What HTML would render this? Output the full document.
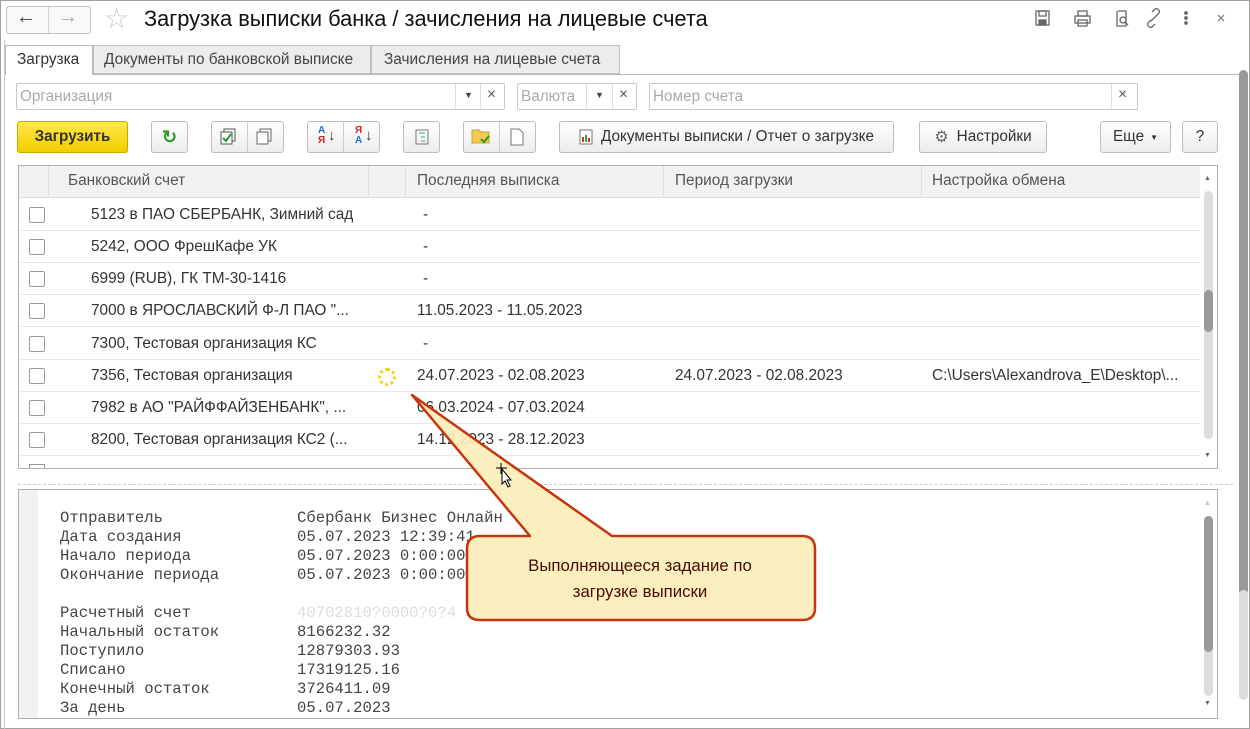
<!DOCTYPE html>
<html><head><meta charset="utf-8"><style>
*{box-sizing:border-box;margin:0;padding:0}
body{width:1250px;height:729px;background:#fff;font-family:"Liberation Sans",Arial,sans-serif;font-size:15.4px;color:#333;position:relative;overflow:hidden}
.a{position:absolute}
.btn{position:absolute;border:1px solid #bdbdbd;border-radius:3px;background:linear-gradient(#fff,#ececec);height:32px;display:flex;align-items:center;justify-content:center;color:#333;font-size:15.3px}
.inp{position:absolute;border:1px solid #c8c8c8;border-radius:2px;height:27px;background:#fff;color:#aaa;font-size:15.3px;padding:4px 3px}
.row{position:absolute;left:19px;width:1181px;height:32px;border-bottom:1px solid #e8e8e8}
.cb{position:absolute;left:10px;top:8px;width:16px;height:16px;border:1px solid #999;border-radius:2px;background:#fff}
.row span{position:absolute;top:7px;white-space:nowrap}
.mono{font-family:"Liberation Mono",monospace;font-size:15.6px;color:#444;line-height:19px;white-space:pre;position:absolute}
</style></head><body>
<div class="a" style="left:0;top:0;width:1250px;height:729px;border:1px solid #a0a0a0"></div>
<div class="a" style="left:4px;top:40px;width:1px;height:689px;background:#c8c8c8"></div>
<div class="a" style="left:6px;top:6px;width:85px;height:28px;border:1px solid #c0c0c0;border-radius:3px;background:#f8f8f8"></div>
<div class="a" style="left:48px;top:7px;width:1px;height:26px;background:#d0d0d0"></div>
<div class="a" style="left:16px;top:6px;font-size:20px;color:#444">&#8592;</div>
<div class="a" style="left:58px;top:6px;font-size:20px;color:#aaa">&#8594;</div>
<div class="a" style="left:104px;top:2px;font-size:28px;color:#ccc">&#9734;</div>
<div class="a" style="left:144px;top:6px;font-size:21.8px;color:#111">Загрузка выписки банка / зачисления на лицевые счета</div>
<svg class="a" style="left:1030px;top:8px" width="200" height="22" fill="none" stroke="#666" stroke-width="1.3">
<rect x="6" y="3" width="13" height="14"/><rect x="9" y="3" width="7" height="5"/><rect x="9" y="12" width="7" height="5" fill="#666"/>
<rect x="45" y="8" width="15" height="7"/><rect x="48" y="3" width="9" height="5"/><rect x="48" y="12" width="9" height="6"/>
<path d="M88 3h8v15h-9v-15"/><circle cx="93" cy="12" r="3"/><path d="M95 14l3 3"/>
<path d="M121 12l-3 3a3 3 0 0 0 4 4l3-3M126 8l3-3a3 3 0 0 0-4-4l-3 3M121 13l5-5"/>
<circle cx="156" cy="5" r="1.2" fill="#666"/><circle cx="156" cy="10" r="1.2" fill="#666"/><circle cx="156" cy="15" r="1.2" fill="#666"/>
<path d="M188 7l6 6M194 7l-6 6" stroke="#888"/>
</svg>
<div class="a" style="left:5px;top:74px;width:1235px;height:1px;background:#b8b8b8"></div>
<div class="a" style="left:5px;top:45px;width:88px;height:30px;border:1px solid #b8b8b8;border-bottom:none;background:#fff;padding:5px 11px;color:#333">Загрузка</div>
<div class="a" style="left:93px;top:45px;width:278px;height:29px;border:1px solid #c0c0c0;background:#ececec;padding:5px 10px;color:#444">Документы по банковской выписке</div>
<div class="a" style="left:371px;top:45px;width:249px;height:29px;border:1px solid #c0c0c0;background:#ececec;padding:5px 12px;color:#444">Зачисления на лицевые счета</div>
<div class="inp" style="left:16px;top:83px;width:489px">Организация</div>
<div class="a" style="left:455px;top:84px;width:1px;height:25px;background:#ddd"></div>
<div class="a" style="left:480px;top:84px;width:1px;height:25px;background:#ddd"></div>
<div class="a" style="left:464px;top:90px;font-size:9px;color:#444">▼</div>
<div class="a" style="left:487px;top:86px;color:#555">×</div>
<div class="inp" style="left:517px;top:83px;width:120px">Валюта</div>
<div class="a" style="left:586px;top:84px;width:1px;height:25px;background:#ddd"></div>
<div class="a" style="left:612px;top:84px;width:1px;height:25px;background:#ddd"></div>
<div class="a" style="left:595px;top:90px;font-size:9px;color:#444">▼</div>
<div class="a" style="left:619px;top:86px;color:#555">×</div>
<div class="inp" style="left:649px;top:83px;width:489px">Номер счета</div>
<div class="a" style="left:1111px;top:84px;width:1px;height:25px;background:#ddd"></div>
<div class="a" style="left:1118px;top:86px;color:#555">×</div>
<div class="btn" style="left:17px;top:121px;width:111px;background:linear-gradient(#ffe84a,#f2cd00);border-color:#c9a800;font-weight:bold;color:#333">Загрузить</div>
<div class="btn" style="left:151px;top:121px;width:37px;color:#2a9a2a;font-size:18px;font-weight:bold">&#8635;</div>
<div class="btn" style="left:211px;top:121px;width:73px"></div>
<div class="a" style="left:247px;top:122px;width:1px;height:30px;background:#ccc"></div>
<svg class="a" style="left:220px;top:128px" width="60" height="18" fill="none"><rect x="4" y="1" width="11" height="12" stroke="#555"/><rect x="1" y="4" width="11" height="12" fill="#fff" stroke="#555"/><path d="M3 10l3 3 5-7" stroke="#2a9a2a" stroke-width="2"/><rect x="40" y="1" width="11" height="12" stroke="#666"/><rect x="37" y="4" width="11" height="12" fill="#fff" stroke="#666"/></svg>
<div class="btn" style="left:307px;top:121px;width:73px"></div>
<div class="a" style="left:343px;top:122px;width:1px;height:30px;background:#ccc"></div>
<div class="a" style="left:318px;top:126px;font-size:10px;line-height:10px;font-weight:bold"><span style="color:#2a6ac8">А</span><br><span style="color:#c82a2a">Я</span></div>
<div class="a" style="left:328px;top:127px;font-size:15px">↓</div>
<div class="a" style="left:355px;top:126px;font-size:10px;line-height:10px;font-weight:bold"><span style="color:#c82a2a">Я</span><br><span style="color:#2a6ac8">А</span></div>
<div class="a" style="left:365px;top:127px;font-size:15px">↓</div>
<div class="btn" style="left:403px;top:121px;width:37px"><svg width="14" height="16" fill="none" stroke="#777"><rect x="1" y="1" width="12" height="14"/><path d="M4 4h6M6 8h4M6 12h4" stroke="#3a9"/></svg></div>
<div class="btn" style="left:463px;top:121px;width:73px"></div>
<div class="a" style="left:499px;top:122px;width:1px;height:30px;background:#ccc"></div>
<svg class="a" style="left:471px;top:127px" width="60" height="20"><path d="M1 3h7l2 2h8v11H1z" fill="#f3c94f" stroke="#c9a23a"/><path d="M10 12l3 3 5-6" stroke="#2a9a2a" stroke-width="2" fill="none"/><path d="M40 2h8l4 4v12H40z" fill="#fff" stroke="#777"/></svg>
<div class="btn" style="left:559px;top:121px;width:335px"><svg width="14" height="16" style="margin-right:8px"><rect x="1" y="1" width="12" height="14" fill="#fff" stroke="#777"/><rect x="3" y="8" width="2" height="5" fill="#c33"/><rect x="6" y="6" width="2" height="7" fill="#3a3"/><rect x="9" y="9" width="2" height="4" fill="#c33"/></svg>Документы выписки / Отчет о загрузке</div>
<div class="btn" style="left:919px;top:121px;width:128px"><span style="font-size:16px;color:#666;margin-right:8px">⚙</span>Настройки</div>
<div class="btn" style="left:1100px;top:121px;width:71px">Еще <span style="font-size:8px;margin-left:6px">▼</span></div>
<div class="btn" style="left:1182px;top:121px;width:36px">?</div>
<div class="a" style="left:18px;top:165px;width:1200px;height:304px;border:1px solid #b0b0b0"></div>
<div class="a" style="left:19px;top:166px;width:1181px;height:32px;background:#f2f2f2;border-bottom:1px solid #ddd"></div>
<div class="a" style="left:48px;top:166px;width:1px;height:32px;background:#ddd"></div>
<div class="a" style="left:368px;top:166px;width:1px;height:32px;background:#ddd"></div>
<div class="a" style="left:405px;top:166px;width:1px;height:32px;background:#ddd"></div>
<div class="a" style="left:663px;top:166px;width:1px;height:32px;background:#ddd"></div>
<div class="a" style="left:921px;top:166px;width:1px;height:32px;background:#ddd"></div>
<div class="a" style="left:68px;top:172px;color:#555">Банковский счет</div>
<div class="a" style="left:417px;top:172px;color:#555">Последняя выписка</div>
<div class="a" style="left:675px;top:172px;color:#555">Период загрузки</div>
<div class="a" style="left:932px;top:172px;color:#555">Настройка обмена</div>
<div class="row" style="top:199px"><div class="cb"></div><span style="left:72px">5123 в ПАО СБЕРБАНК, Зимний сад</span><span style="left:404px">-</span></div>
<div class="row" style="top:231px"><div class="cb"></div><span style="left:72px">5242, ООО ФрешКафе УК</span><span style="left:404px">-</span></div>
<div class="row" style="top:263px"><div class="cb"></div><span style="left:72px">6999 (RUB), ГК ТМ-30-1416</span><span style="left:404px">-</span></div>
<div class="row" style="top:295px"><div class="cb"></div><span style="left:72px">7000 в ЯРОСЛАВСКИЙ Ф-Л ПАО "...</span><span style="left:398px">11.05.2023 - 11.05.2023</span></div>
<div class="row" style="top:328px"><div class="cb"></div><span style="left:72px">7300, Тестовая организация КС</span><span style="left:404px">-</span></div>
<div class="row" style="top:360px"><div class="cb"></div><span style="left:72px">7356, Тестовая организация</span><span style="left:398px">24.07.2023 - 02.08.2023</span><span style="left:656px">24.07.2023 - 02.08.2023</span><span style="left:913px">C:\Users\Alexandrova_E\Desktop\...</span></div>
<div class="a" style="left:378px;top:368px;width:18px;height:18px;border:3px dotted #f0d020;border-radius:50%"></div>
<div class="row" style="top:392px"><div class="cb"></div><span style="left:72px">7982 в АО "РАЙФФАЙЗЕНБАНК", ...</span><span style="left:398px">06.03.2024 - 07.03.2024</span></div>
<div class="row" style="top:424px"><div class="cb"></div><span style="left:72px">8200, Тестовая организация КС2 (...</span><span style="left:398px">14.12.2023 - 28.12.2023</span></div>
<div class="a" style="left:29px;top:464px;width:16px;height:4px;border:1px solid #999;border-bottom:none"></div>
<div class="a" style="left:1204px;top:175px;font-size:7px;color:#666">▲</div>
<div class="a" style="left:1204px;top:191px;width:9px;height:248px;background:#ddd;border-radius:5px"></div>
<div class="a" style="left:1204px;top:290px;width:9px;height:42px;background:#9a9a9a;border-radius:5px"></div>
<div class="a" style="left:1204px;top:452px;font-size:7px;color:#666">▼</div>
<div class="a" style="left:18px;top:484px;width:1215px;border-top:1px dashed #ccc"></div>
<div class="a" style="left:18px;top:489px;width:1200px;height:230px;border:1px solid #b0b0b0"></div>
<div class="a" style="left:19px;top:490px;width:19px;height:228px;background:#f2f2f2"></div>
<div class="mono" style="left:60px;top:509px">Отправитель
Дата создания
Начало периода
Окончание периода

Расчетный счет
Начальный остаток
Поступило
Списано
Конечный остаток
За день</div>
<div class="mono" style="left:297px;top:509px">Сбербанк Бизнес Онлайн
05.07.2023 12:39:41
05.07.2023 0:00:00
05.07.2023 0:00:00

<span style="color:#ddd">40702810?0000?0?4</span>
8166232.32
12879303.93
17319125.16
3726411.09
05.07.2023</div>
<div class="a" style="left:1204px;top:500px;font-size:7px;color:#bbb">▲</div>
<div class="a" style="left:1204px;top:516px;width:9px;height:180px;background:#ddd;border-radius:5px"></div>
<div class="a" style="left:1204px;top:516px;width:9px;height:136px;background:#9a9a9a;border-radius:5px"></div>
<div class="a" style="left:1204px;top:700px;font-size:7px;color:#666">▼</div>
<div class="a" style="left:1239px;top:70px;width:9px;height:525px;background:#9a9a9a;border-radius:5px"></div>
<div class="a" style="left:1239px;top:590px;width:9px;height:110px;background:#ddd;border-radius:5px"></div>
<svg class="a" style="left:0;top:0" width="1250" height="729">
<path d="M478 536 L530 536 L412 395 L612 536 L802 536 Q815 536 815 549 L815 608 Q815 620 802 620 L480 620 Q467 620 467 608 L467 549 Q467 536 480 536 Z" fill="#fbeebb" fill-opacity="0.93" stroke="#c8340c" stroke-width="2.5" stroke-linejoin="round"/>
<text x="640" y="571" text-anchor="middle" font-family="Liberation Sans,sans-serif" font-size="16.8" fill="#4a0a00">Выполняющееся задание по</text>
<text x="640" y="597" text-anchor="middle" font-family="Liberation Sans,sans-serif" font-size="16.8" fill="#4a0a00">загрузке выписки</text>
<path d="M501 463 v11 M496 468 h11 M502 469 l0 15 l3-3 l3 6 l2-1 l-3-6 l4 0 z" stroke="#000" stroke-width="1" fill="#fff"/>
</svg>
</body></html>
